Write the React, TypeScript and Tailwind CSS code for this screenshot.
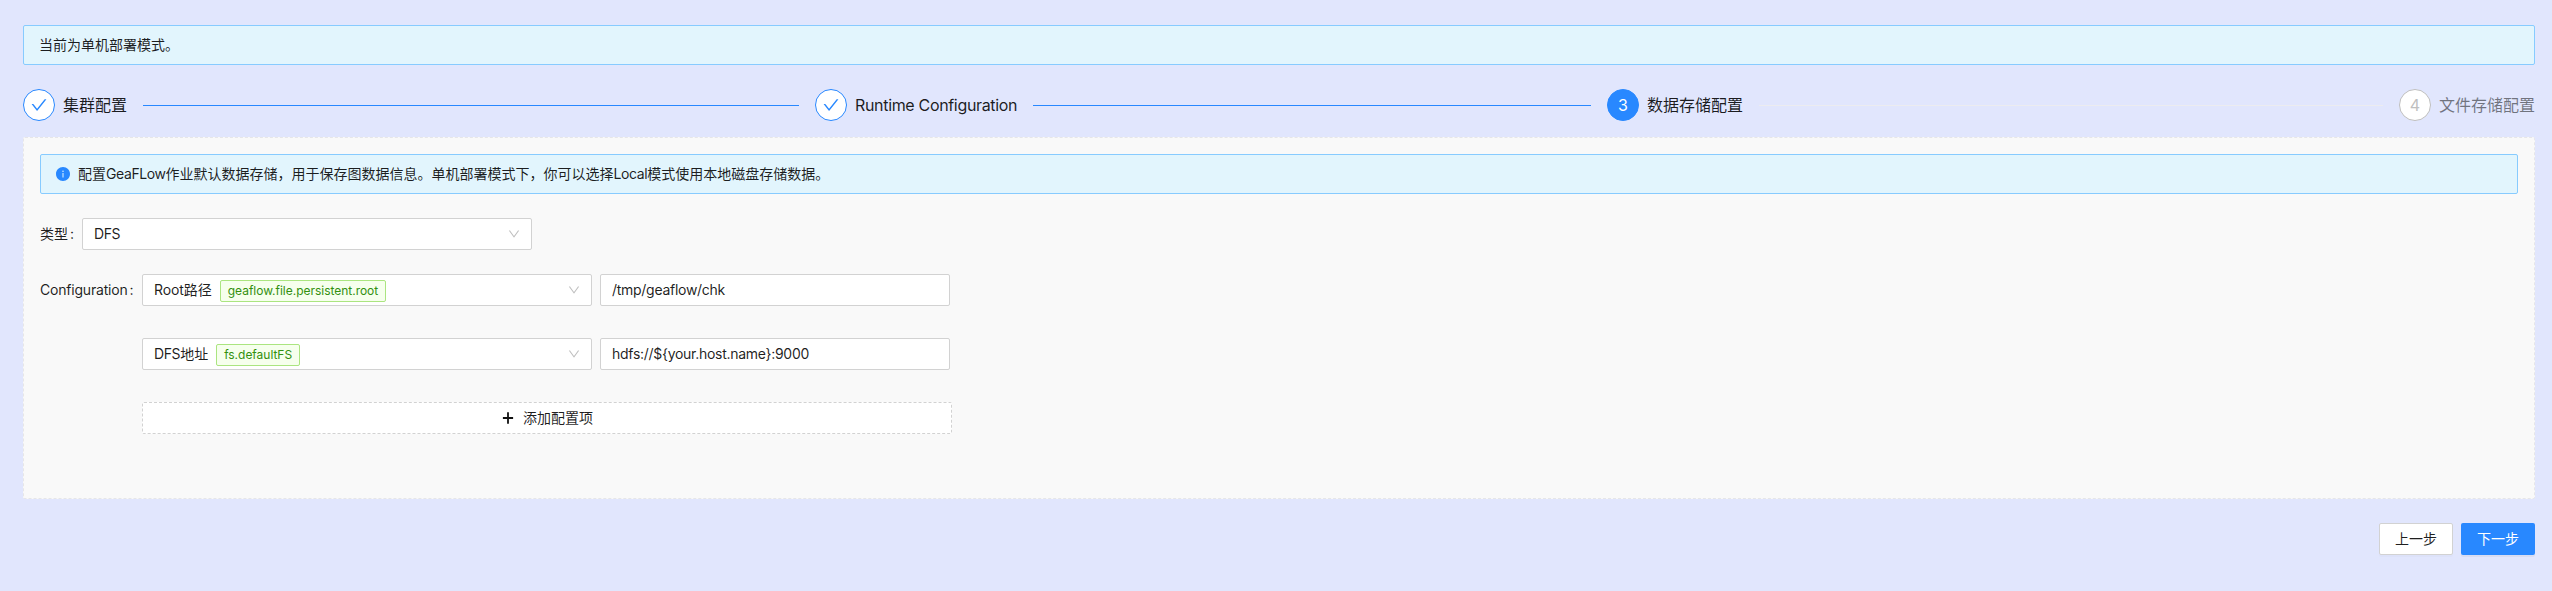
import React from "react";

const CheckIcon = () => (
  <svg viewBox="64 64 896 896" className="h-4 w-4" fill="currentColor">
    <path d="M912 190h-69.9c-9.8 0-19.1 4.5-25.1 12.2L404.7 724.5 207 474a32 32 0 0 0-25.1-12.2H112c-6.7 0-10.4 7.7-6.3 12.9l273.9 347c12.8 16.2 37.4 16.2 50.3 0l488.4-618.9c4.1-5.1.4-12.8-6.3-12.8z" />
  </svg>
);

const DownIcon = () => (
  <svg viewBox="64 64 896 896" className="h-3 w-3 shrink-0 text-[#bfbfbf]" fill="currentColor">
    <path d="M884 256h-75c-5.1 0-9.9 2.5-12.9 6.6L512 654.2 227.9 262.6c-3-4.1-7.8-6.6-12.9-6.6h-75c-6.5 0-10.3 7.4-6.5 12.7l352.6 486.1c12.8 17.6 39 17.6 51.7 0l352.6-486.1c3.9-5.3.1-12.7-6.4-12.7z" />
  </svg>
);

const InfoIcon = () => (
  <svg viewBox="64 64 896 896" className="h-3.5 w-3.5 shrink-0 text-[#2888ff]" fill="currentColor">
    <path d="M512 64C264.6 64 64 264.6 64 512s200.6 448 448 448 448-200.6 448-448S759.4 64 512 64zm32 664c0 4.4-3.6 8-8 8h-48c-4.4 0-8-3.6-8-8V456c0-4.4 3.6-8 8-8h48c4.4 0 8 3.6 8 8v272zm-32-344a48.01 48.01 0 0 1 0-96 48.01 48.01 0 0 1 0 96z" />
  </svg>
);

const PlusIcon = () => (
  <svg viewBox="0 0 14 14" className="h-3.5 w-3.5 shrink-0" fill="none" stroke="#111" strokeWidth="1.8">
    <path d="M7 1.2v11.6M1.9 7h10.2" />
  </svg>
);

type Status = "finish" | "process" | "wait";

const circleStyles: Record<Status, string> = {
  finish: "border-[#2888ff] bg-white text-[#2888ff]",
  process: "border-[#2888ff] bg-[#2888ff] text-white",
  wait: "border-[#bfbfbf] bg-white text-[#bfbfbf]",
};

const Latin = ({ children }: { children: React.ReactNode }) => <span className="tracking-[-0.4px]">{children}</span>;

function Step({ index, title, status, last }: { index: number; title: React.ReactNode; status: Status; last?: boolean }) {
  return (
    <li className={`flex h-8 items-center ${last ? "flex-none" : "flex-1 pr-4"}`}>
      <span className={`mr-2 flex h-8 w-8 shrink-0 items-center justify-center rounded-full border text-base leading-none ${circleStyles[status]}`}>
        {status === "finish" ? <CheckIcon /> : index}
      </span>
      <span className={`whitespace-nowrap text-base leading-8 ${status === "wait" ? "text-black/50" : "text-black/88"}`}>
        {title}
      </span>
      {!last && <span className={`mt-px ml-4 h-px flex-1 ${status === "finish" ? "bg-[#2888ff]" : "bg-[#ececf0]"}`} />}
    </li>
  );
}

function Select({ label, tag }: { label: React.ReactNode; tag?: string }) {
  return (
    <div className="flex h-8 w-[450px] items-center rounded-xs border border-[#d2d2d2] bg-white pr-[11px] pl-[11px]">
      <span>{label}</span>
      {tag && (
        <span className="mt-0.5 ml-2 rounded-xs border border-[#abe580] bg-[#f6ffed] px-[7px] text-xs leading-5 tracking-[-0.02px] text-[#33900f]">
          {tag}
        </span>
      )}
      <span className="flex-1" />
      <DownIcon />
    </div>
  );
}

function ConfigRow({ label, tag, value }: { label: React.ReactNode; tag: string; value: string }) {
  return (
    <div className="flex gap-2">
      <Select label={label} tag={tag} />
      <div className="flex h-8 w-[350px] items-center rounded-xs border border-[#d2d2d2] bg-white px-[11px] tracking-[-0.28px]">{value}</div>
    </div>
  );
}

export default function App() {
  return (
    <div className="h-[591px] overflow-hidden bg-[#e1e6fd] pt-[25px] pr-[17px] pl-[23px] font-[Inter,'Noto_Sans_CJK_SC',sans-serif] text-sm text-black/88">
      <div className="flex h-10 items-center rounded-xs border border-[#87cbff] bg-[#e2f5fd] px-[15px]">当前为单机部署模式。</div>

      <ol className="mt-6 flex">
        <Step index={1} title="集群配置" status="finish" />
        <Step index={2} title={<span className="tracking-[-0.33px]">Runtime Configuration</span>} status="finish" />
        <Step index={3} title="数据存储配置" status="process" />
        <Step index={4} title="文件存储配置" status="wait" last />
      </ol>

      <main className="mt-4 h-[362px] rounded-xs border border-dashed border-[#e6e6e8] bg-[#f9f9f9] p-4">
        <div className="flex h-10 items-center gap-2 rounded-xs border border-[#87cbff] bg-[#e2f5fd] px-[15px]">
          <InfoIcon />
          <span>
            配置<Latin>GeaFLow</Latin>作业默认数据存储，用于保存图数据信息。单机部署模式下，你可以选择<Latin>Local</Latin>模式使用本地磁盘存储数据。
          </span>
        </div>

        <div className="mt-6 flex items-center">
          <span className="w-[42px]">类型<span className="ml-0.5">:</span></span>
          <Select label={<Latin>DFS</Latin>} />
        </div>

        <div className="mt-6 flex items-start">
          <span className="w-[102px] leading-8"><span className="tracking-[-0.2px]">Configuration</span><span className="ml-0.5">:</span></span>
          <div className="flex flex-col gap-8">
            <ConfigRow label={<><span className="tracking-[-0.1px]">Root</span>路径</>} tag="geaflow.file.persistent.root" value="/tmp/geaflow/chk" />
            <ConfigRow label={<><Latin>DFS</Latin>地址</>} tag="fs.defaultFS" value="hdfs://${your.host.name}:9000" />
            <button className="flex h-8 w-[810px] items-center justify-center gap-2 rounded-xs border border-dashed border-[#d2d2d2] bg-white">
              <PlusIcon />
              <span>添加配置项</span>
            </button>
          </div>
        </div>
      </main>

      <div className="mt-6 flex justify-end gap-2">
        <button className="h-8 w-[74px] rounded-xs border border-[#d2d2d2] bg-white shadow-[0_2px_0_rgba(0,0,0,0.016)]">上一步</button>
        <button className="h-8 w-[74px] rounded-xs bg-[#2888ff] text-white shadow-[0_2px_0_rgba(0,0,0,0.045)]">下一步</button>
      </div>
    </div>
  );
}
